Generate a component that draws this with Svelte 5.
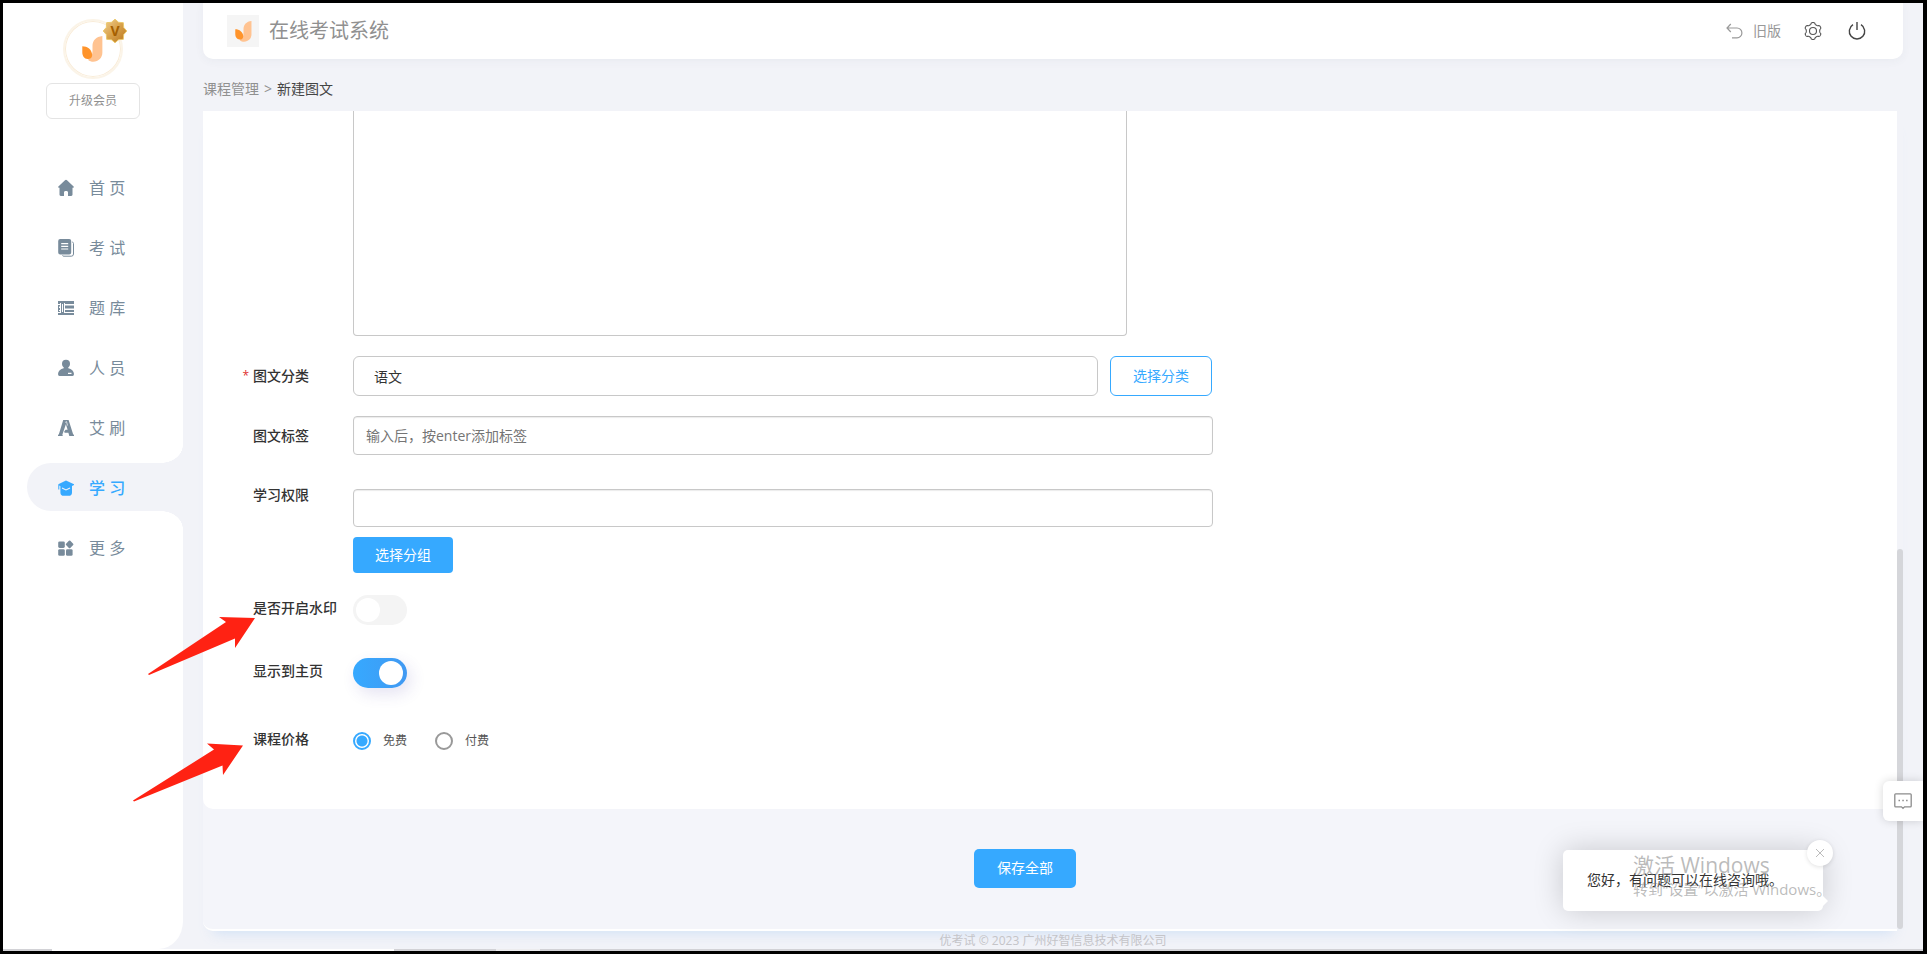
<script>
  const menu = [
    { label: '首 页', icon: 'home' },
    { label: '考 试', icon: 'exam' },
    { label: '题 库', icon: 'bank' },
    { label: '人 员', icon: 'people' },
    { label: '艾 刷', icon: 'ai' },
    { label: '学 习', icon: 'study', active: true },
    { label: '更 多', icon: 'more' }
  ];

  let category = $state('语文');
  let tags = $state('');
  let groups = $state('');
  let watermark = $state(false);
  let onHome = $state(true);
  let price = $state('free');

  // Closed outline whose radius swells into `lobes` rounded teeth.
  function toothed(cx, cy, radius, depth, lobes, sharpness) {
    const points = [];
    for (let i = 0; i < 144; i++) {
      const a = (i / 144) * Math.PI * 2;
      const r = radius + depth * Math.tanh(sharpness * Math.cos(lobes * a));
      points.push(`${(cx + r * Math.sin(a)).toFixed(2)} ${(cy - r * Math.cos(a)).toFixed(2)}`);
    }
    return `M${points.join('L')}Z`;
  }

  const gear = toothed(9, 9, 7.6, 0.9, 6, 2);

  const star = Array.from({ length: 16 }, (_, i) => {
    const a = (i / 16) * Math.PI * 2;
    const r = i % 2 ? 9.4 : 11.8;
    return `${(12 + r * Math.sin(a)).toFixed(2)},${(12 - r * Math.cos(a)).toFixed(2)}`;
  }).join(' ');
</script>

{#snippet logo(cls)}
  <svg class={cls} viewBox="0 0 62 79" aria-hidden="true">
    <path fill="#ffc391" d="M61 0C42 2 31 14 31 30V44C31 56 28 66 17 72C22 77 28 78 33 78C50 77 61 66 61 50Z" />
    <path fill="#ff942b" d="M0 31C15 31 30 41 30 58C30 66 24 71 16 70C6 69 0 60 0 50Z" />
  </svg>
{/snippet}

<div class="page">
  <aside class="sidebar">
    <div class="avatar">
      {@render logo('avatar-logo')}
      <svg class="badge" viewBox="0 0 24 24" aria-hidden="true">
        <defs>
          <linearGradient id="gold" x1="0" y1="0" x2="1" y2="1">
            <stop offset="0" stop-color="#f0cf95" />
            <stop offset="0.45" stop-color="#dba650" />
            <stop offset="1" stop-color="#b9731a" />
          </linearGradient>
        </defs>
        <polygon points={star} fill="url(#gold)" stroke="#ecc96c" stroke-width="1" stroke-linejoin="round" />
        <text x="12" y="17" text-anchor="middle" class="badge-text">V</text>
      </svg>
    </div>
    <button class="upgrade" type="button">升级会员</button>

    <nav>
      {#each menu as item}
        <a href="#{item.icon}" class:active={item.active}>
          <svg viewBox="0 0 16 18" width="16" height="18" fill="currentColor" aria-hidden="true">
            {#if item.icon === 'home'}
              <path d="M8 .8C7.6.8 7.3 1 7 1.2L.4 7.4C-.1 8 .1 8.8.9 8.8H1.5V15.6C1.5 16.4 2 17 2.800 17H6V13.300C6 11.600 10 11.600 10 13.300V17H13.200C14 17 14.500 16.400 14.500 15.600V8.800H15.100C15.900 8.800 16.100 8 15.600 7.400L9 1.200C8.700 1 8.400.8 8 .8Z" />
            {:else if item.icon === 'exam'}
              <path fill-rule="evenodd" d="M2.200 0H11.200Q13.200 0 13.200 2V13.600Q13.200 15.600 11.200 15.600H2.200Q.2 15.600.2 13.600V2Q.2 0 2.200 0ZM3.200 4V5.200H10.200V4ZM3.200 6.700V7.900H10.200V6.700ZM3.200 9.400V10.600H10.200V9.400Z" />
              <path d="M14.300 3Q15.500 3.300 15.500 4.500V15Q15.500 17.200 13.300 17.200H6Q4.800 17.200 4.400 16.500" fill="none" stroke="currentColor" />
            {:else if item.icon === 'bank'}
              <path d="M0 2H16V5H7V4H2V5H0ZM0 6H2V7.500H1V9H2V11H1V12H2V13H0ZM0 14H16V16H0ZM7 6.500H16V9.500H7ZM7 11H16V13H7Z" />
              <path fill-rule="evenodd" d="M3 4H6V14H3ZM4 5V13H5V5Z" />
            {:else if item.icon === 'people'}
              <path fill-rule="evenodd" d="M8 .8A4 4 0 0 1 12 4.800C12 6.500 11.200 7.600 10.300 8.300V9.200C13.500 10 15.900 12 16 15Q16 17 14.500 17H1.500Q0 17 0 15C.1 12 2.500 10 5.700 9.200V8.300C4.800 7.600 4 6.500 4 4.800A4 4 0 0 1 8 .8ZM10 13.700V14.900H13.500V13.700Z" />
            {:else if item.icon === 'ai'}
              <path fill-rule="evenodd" d="M5.200 1H10.600L15.200 15.400L16 15.700V17H11.300L10.400 13.800H6.600L6.200 12.600L7.600 10.800H9.600L7.900 5.200L4.400 15.500L4.800 17H0V15.700L.8 15.400Z" />
              <path d="M7.200 3.400L8.500 2.600L9.500 6.500" stroke="#fff" stroke-width=".7" fill="none" />
            {:else if item.icon === 'study'}
              <path d="M8 1.400L16 5.200Q16.400 5.500 16 5.900L14 7V13.400Q14 16.800 10.500 16.800H5.900Q2.400 16.800 2.400 13.400V7.200L1.300 6.600V10.500H.3V5.700Q.3 5.200.8 5Z" />
              <path d="M4 9L8 11L12 9" stroke="#f2f3f8" fill="none" stroke-width="1.100" />
            {:else}
              <rect x=".2" y="2.400" width="6.600" height="6.600" rx="1.400" />
              <rect x=".2" y="10.200" width="6.600" height="6.600" rx="1.400" />
              <rect x="8" y="10.200" width="6.600" height="6.600" rx="1.400" />
              <rect x="8.600" y="2.400" width="6" height="6" rx="1" transform="rotate(45 11.600 5.400)" />
            {/if}
          </svg>
          <span>{item.label}</span>
        </a>
      {/each}
    </nav>
  </aside>

  <div class="main">
    <header>
      <span class="brand-logo">{@render logo('header-logo')}</span>
      <h1>在线考试系统</h1>
      <a class="old" href="#old">
        <svg viewBox="0 0 17 16" width="17" height="16" fill="none" stroke="currentColor" stroke-width="1.200" aria-hidden="true">
          <path d="M4.800 1L1 5L4.800 9M1 5H11A4.900 4.900 0 0 1 11 14.800H6" />
        </svg>
        旧版
      </a>
      <button class="tool" type="button" aria-label="设置">
        <svg viewBox="0 0 18 18" width="18" height="18" fill="none" stroke="#555" stroke-width="1.100" aria-hidden="true">
          <path d={gear} />
          <circle cx="9" cy="9" r="3.500" />
        </svg>
      </button>
      <button class="tool" type="button" aria-label="退出">
        <svg viewBox="0 0 18 18" width="18" height="18" fill="none" stroke="#444" stroke-width="1.400" aria-hidden="true">
          <path d="M5 2.700A7.700 7.700 0 1 0 13 2.700M9 0V8" />
        </svg>
      </button>
    </header>

    <div class="crumbs">
      <a href="#courses">课程管理</a><span class="sep">&gt;</span><span class="current">新建图文</span>
    </div>

    <div class="scroller">
      <div class="panel">
        <form class="card" id="lesson" onsubmit={(e) => e.preventDefault()}>
          <textarea class="editor" aria-label="图文内容"></textarea>

          <div class="row category">
            <label for="category"><i>*</i>图文分类</label>
            <div class="pair">
              <input id="category" type="text" bind:value={category} />
              <button class="outline" type="button">选择分类</button>
            </div>
          </div>

          <div class="row tags">
            <label for="tags">图文标签</label>
            <input id="tags" type="text" placeholder="输入后，按enter添加标签" bind:value={tags} />
          </div>

          <div class="row groups">
            <label for="groups">学习权限</label>
            <div class="stack">
              <input id="groups" type="text" bind:value={groups} />
              <button class="solid" type="button">选择分组</button>
            </div>
          </div>

          <div class="row toggle">
            <label for="watermark">是否开启水印</label>
            <input id="watermark" class="switch" type="checkbox" bind:checked={watermark} />
          </div>

          <div class="row toggle">
            <label for="home">显示到主页</label>
            <input id="home" class="switch" type="checkbox" bind:checked={onHome} />
          </div>

          <div class="row price" role="radiogroup" aria-labelledby="price-label">
            <span class="label" id="price-label">课程价格</span>
            <div class="choices">
              <label><input type="radio" name="price" value="free" bind:group={price} />免费</label>
              <label><input type="radio" name="price" value="paid" bind:group={price} />付费</label>
            </div>
          </div>
        </form>
        <div class="actions">
          <button class="solid save" type="submit" form="lesson">保存全部</button>
        </div>
      </div>
      <div class="track"><div class="thumb"></div></div>
    </div>

    <footer>优考试 © 2023 广州好智信息技术有限公司</footer>
  </div>

  <div class="strip"><span class="strip-window"></span><span class="strip-tab"></span></div>

  <button class="chat" type="button" aria-label="在线咨询">
    <svg viewBox="0 0 18 17" width="18" height="17" fill="none" stroke="#8c8c8c" stroke-width="1.300" aria-hidden="true">
      <path d="M1.700.8H16.300Q17.200.8 17.200 1.700V13Q17.200 13.900 16.300 13.900H10.500L9 15.400L7.500 13.900H1.700Q.8 13.900.8 13V1.700Q.8.8 1.700.8Z" />
      <path d="M4.500 7.500H6M8.300 7.500H9.800M12.100 7.500H13.600" stroke-width="1.500" />
    </svg>
  </button>

  <div class="popup">
    您好，有问题可以在线咨询哦。
    <button type="button" aria-label="关闭">
      <svg viewBox="0 0 10 10" width="10" height="10" stroke="#bbb" aria-hidden="true"><path d="M1 1L9 9M9 1L1 9" /></svg>
    </button>
  </div>

  <div class="activation">
    <strong>激活 Windows</strong>
    <span>转到“设置”以激活 Windows。</span>
  </div>

  <svg class="pointer first" viewBox="0 0 108 59" aria-hidden="true">
    <polygon points="3,61 81,9 74,4 110,5 90,35 90,25.500 4,62" />
  </svg>
  <svg class="pointer second" viewBox="0 0 111 59" aria-hidden="true">
    <polygon points="3,60.600 84,9.500 77,3.500 113,5.500 93,35 92.500,25.500 4,61.500" />
  </svg>
</div>

<style>
  :global(body) {
    margin: 0;
  }

  .page {
    position: relative;
    box-sizing: border-box;
    min-height: 100vh;
    display: grid;
    grid-template: 1fr 2px / 180px minmax(0, 1fr);
    border: 3px solid #000;
    border-right-width: 4px;
    background: #f2f3f8;
    color: #333;
    font: 14px/20px 'Open Sans', 'Noto Sans CJK SC', sans-serif;
  }

  .page :global(*) {
    box-sizing: border-box;
  }

  button,
  input,
  textarea {
    font: inherit;
    margin: 0;
  }

  button {
    padding: 0;
    cursor: pointer;
  }

  a {
    color: inherit;
    text-decoration: none;
  }

  svg {
    display: block;
    flex: none;
  }

  .sidebar {
    display: flex;
    flex-direction: column;
    align-items: center;
    padding-top: 16px;
    background: #fff;
    border-bottom-right-radius: 24px 28px;
  }

  .avatar {
    position: relative;
    display: grid;
    place-items: center;
    width: 60px;
    height: 60px;
    padding-right: 2px;
    border: 2px solid #fbf4e8;
    border-radius: 50%;
    box-shadow: inset 0 0 0 1px #f9ecd8;
  }

  .page :global(.avatar-logo) {
    width: 21px;
    height: 26px;
  }

  .page :global(.header-logo) {
    width: 17px;
    height: 21px;
  }

  .badge {
    position: absolute;
    top: -2px;
    right: -6px;
    width: 24px;
    height: 24px;
  }

  .badge-text {
    font: 700 14px 'Open Sans', sans-serif;
    fill: #a55f00;
  }

  .upgrade {
    width: 94px;
    height: 36px;
    margin-top: 4px;
    border: 1px solid #e4e4e4;
    border-radius: 6px;
    background: #fff;
    color: #909090;
    font-size: 12px;
  }

  nav {
    align-self: stretch;
    display: flex;
    flex-direction: column;
    gap: 12px;
    margin-top: 44px;
    padding-left: 24px;
  }

  nav a {
    position: relative;
    display: flex;
    align-items: center;
    gap: 15px;
    height: 48px;
    padding-top: 1px;
    padding-left: 31px;
    border-radius: 24px 0 0 24px;
    color: #788b9b;
    font-size: 16px;
  }

  nav a.active {
    background: #f2f3f8;
    color: #36a9ff;
  }

  nav a.active span {
    font-weight: 500;
  }

  nav a.active::before,
  nav a.active::after {
    content: '';
    position: absolute;
    right: 0;
    width: 22px;
    height: 18px;
  }

  nav a.active::before {
    bottom: 100%;
    background: radial-gradient(ellipse 22px 18px at 0 0, #fff 98%, #f2f3f8 100%);
  }

  nav a.active::after {
    top: 100%;
    background: radial-gradient(ellipse 22px 18px at 0 100%, #fff 98%, #f2f3f8 100%);
  }

  .main {
    display: flex;
    flex-direction: column;
    padding: 0 20px;
  }

  header {
    display: flex;
    align-items: center;
    height: 56px;
    padding: 0 37px 0 24px;
    border-radius: 0 0 10px 10px;
    background: #fff;
    box-shadow: 0 2px 10px rgba(60, 70, 100, 0.05);
  }

  .brand-logo {
    display: grid;
    place-items: center;
    width: 32px;
    height: 32px;
    background: #f5f5f5;
  }

  h1 {
    flex: 1;
    margin: 0 0 0 10px;
    color: #909090;
    font-size: 20px;
    font-weight: 400;
    line-height: 28px;
  }

  .old {
    display: flex;
    align-items: center;
    gap: 10px;
    color: #999;
  }

  .tool {
    margin-left: 23px;
    border: 0;
    background: none;
  }

  .tool + .tool {
    margin-left: 26px;
  }

  .crumbs {
    display: flex;
    align-items: center;
    gap: 5px;
    height: 52px;
    padding-bottom: 1px;
    padding-top: 9px;
    color: #909090;
  }

  .crumbs .current {
    color: #444;
  }

  .scroller {
    flex: 1;
    display: flex;
    border-radius: 0 0 10px 10px;
    box-shadow: 0 12px 12px -10px rgba(200, 220, 245, 0.8);
  }

  .panel {
    flex: 1;
    min-width: 0;
    display: flex;
    flex-direction: column;
    border-bottom: 2px solid #fff;
    border-bottom-left-radius: 10px;
    background: #f4f5fa;
  }

  .card {
    display: flex;
    flex-direction: column;
    padding: 0 50px 58px;
    border-radius: 0 0 0 10px;
    background: #fff;
  }

  .editor {
    display: block;
    width: 100%;
    max-width: 774px;
    height: 225px;
    margin-left: 100px;
    border: 1px solid #c8c8c8;
    border-top: 0;
    border-radius: 0 0 4px 4px;
    background: #fff;
    outline: 0;
    resize: none;
  }

  .row {
    display: grid;
    grid-template-columns: 100px minmax(0, 860px);
  }

  .row > label,
  .label {
    position: relative;
    font-weight: 500;
    white-space: nowrap;
  }

  .row i {
    position: absolute;
    right: 100%;
    margin-right: 4px;
    color: #e03030;
    font-size: 12px;
    font-style: normal;
    font-weight: 400;
  }

  .row input[type='text'] {
    width: 100%;
    height: 38px;
    padding: 0 12px;
    border: 1px solid #c8c8c8;
    border-radius: 4px;
    background: #fff;
    box-shadow: inset 0 1px 1px rgba(0, 0, 0, 0.08);
    color: #333;
    outline: 0;
  }

  .row input::placeholder {
    color: #757575;
    opacity: 1;
  }

  .category,
  .tags {
    align-items: center;
    margin-top: 20px;
  }

  .pair {
    display: flex;
    gap: 12px;
    padding-right: 1px;
  }

  .category .pair input {
    flex: 1;
    min-width: 0;
    height: 40px;
    padding: 0 20px;
    border-radius: 6px;
    box-shadow: none;
  }

  .tags input[type='text'] {
    height: 39px;
  }

  .outline {
    width: 102px;
    height: 40px;
    border: 1px solid #36a9ff;
    border-radius: 6px;
    background: #fff;
    color: #36a9ff;
  }

  .solid {
    width: 100px;
    height: 36px;
    border: 0;
    border-radius: 4px;
    background: #36a9ff;
    color: #fff;
  }

  .groups {
    margin-top: 30px;
  }

  .stack {
    display: flex;
    flex-direction: column;
    gap: 10px;
    padding-top: 4px;
  }

  .toggle {
    margin-top: 22px;
  }

  .toggle > label {
    padding-top: 3px;
  }

  .toggle + .toggle {
    margin-top: 33px;
  }

  .switch {
    appearance: none;
    display: flex;
    align-items: center;
    width: 54px;
    height: 30px;
    padding: 3px;
    border-radius: 15px;
    background: #f4f4f4;
  }

  .switch::before {
    content: '';
    width: 24px;
    height: 24px;
    border-radius: 50%;
    background: #fff;
  }

  .switch:checked {
    justify-content: flex-end;
    padding-right: 4px;
    background: linear-gradient(90deg, #36a9ff, #4199f2);
    box-shadow: 4px 6px 16px rgba(70, 60, 160, 0.14);
  }

  .price {
    margin-top: 41px;
  }

  .choices {
    display: flex;
    gap: 28px;
    padding-top: 2px;
    color: #555;
    font-size: 12px;
  }

  .choices label {
    display: flex;
    align-items: center;
    gap: 12px;
  }

  .choices input {
    appearance: none;
    width: 18px;
    height: 18px;
    border: 2px solid #999;
    border-radius: 50%;
    background: #fff;
  }

  .choices input:checked {
    border-color: #36a9ff;
    background: radial-gradient(circle, #36a9ff 5px, #fff 6px);
  }

  .actions {
    flex: 1;
    display: flex;
    align-items: center;
    justify-content: center;
    padding: 0 50px 2px 0;
  }

  .save {
    width: 102px;
    height: 39px;
    border-radius: 5px;
  }

  .track {
    display: flex;
    align-items: flex-end;
    width: 6px;
    padding-bottom: 2px;
  }

  .thumb {
    width: 6px;
    height: 380px;
    border-radius: 3px;
    background: #d5d6da;
  }

  footer {
    height: 18px;
    color: #c4c4c8;
    font-size: 12px;
    line-height: 20px;
    text-align: center;
  }

  .strip {
    grid-column: 1 / -1;
    display: flex;
    padding-left: 49px;
    gap: 102px;
    background: #d2d2d6;
  }

  .strip-window {
    width: 342px;
    background: #fff;
  }

  .strip-tab {
    width: 44px;
    background: #ececee;
  }

  .chat {
    position: absolute;
    right: 0;
    bottom: 130px;
    display: grid;
    place-items: center;
    width: 40px;
    height: 40px;
    border: 0;
    border-radius: 6px 0 0 6px;
    background: #fff;
    box-shadow: 0 0 10px rgba(0, 0, 0, 0.16);
  }

  .popup {
    position: absolute;
    right: 100px;
    bottom: 40px;
    width: 260px;
    padding: 20px 24px 21px;
    border-radius: 5px;
    background: #fff;
    box-shadow: 0 0 30px rgba(0, 0, 0, 0.18);
  }

  .popup::after {
    content: '';
    position: absolute;
    right: -5px;
    bottom: 5px;
    border: 5px solid transparent;
    border-left-color: #fff;
    border-right: 0;
  }

  .popup button {
    position: absolute;
    top: -10px;
    right: -10px;
    display: grid;
    place-items: center;
    width: 26px;
    height: 26px;
    border: 0;
    border-radius: 50%;
    background: #fff;
    box-shadow: 0 1px 4px rgba(0, 0, 0, 0.12);
  }

  .activation {
    position: absolute;
    right: 94px;
    bottom: 51px;
    width: 196px;
    display: flex;
    flex-direction: column;
    color: rgba(120, 120, 120, 0.5);
    font-size: 15px;
    line-height: 22px;
    white-space: nowrap;
    pointer-events: none;
  }

  .activation strong {
    font-size: 21px;
    font-weight: 400;
    line-height: 26px;
  }

  .pointer {
    position: absolute;
    overflow: visible;
    fill: #ff2213;
    pointer-events: none;
  }

  .first {
    left: 142px;
    top: 610px;
    width: 108px;
    height: 59px;
  }

  .second {
    left: 127px;
    top: 737px;
    width: 111px;
    height: 59px;
  }
</style>
